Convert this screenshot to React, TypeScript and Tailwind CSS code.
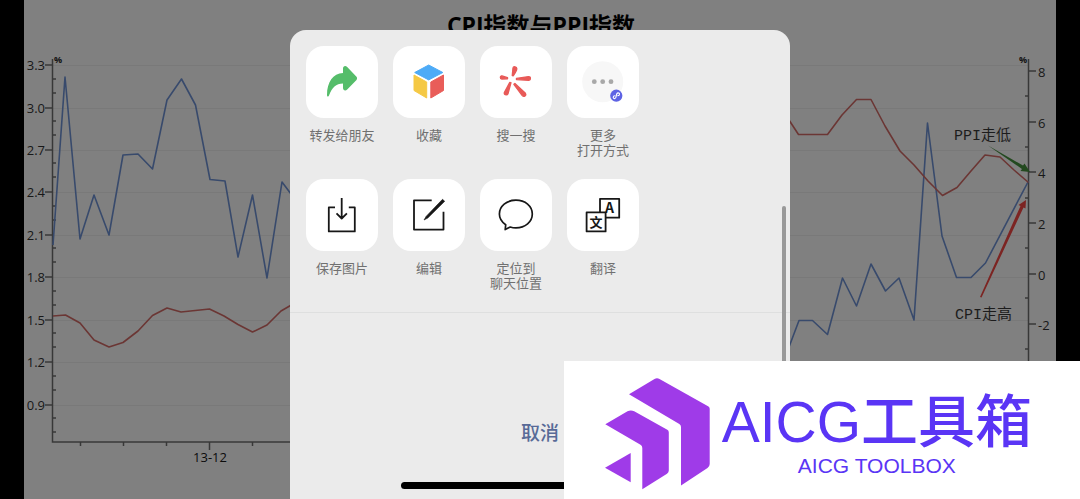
import React from 'react';

const GRID_Y = [65, 108, 150, 192, 235, 277, 320, 362, 405];
const LEFT_LABELS = ['3.3', '3.0', '2.7', '2.4', '2.1', '1.8', '1.5', '1.2', '0.9'];
const LEFT_MINOR = [79, 93, 121, 135, 163, 177, 206, 220, 248, 262, 291, 305, 333, 347, 376, 390, 418, 432];
const RIGHT_TICKS = [
  { label: '8', y: 71 },
  { label: '6', y: 122 },
  { label: '4', y: 172 },
  { label: '2', y: 223 },
  { label: '0', y: 274 },
  { label: '-2', y: 324 },
];
const RIGHT_MINOR = [96, 147, 198, 248, 298, 349];
const BOTTOM_MINOR = [80, 123, 166, 252];

const CPI_LEFT =
  '53,245 65,77 80,239 94,195 109,235 123,155 138,154 152.5,169 167,100 181.5,79 195.5,105 210,179.5 225,181 238,257 252.5,195 267,278 282,182 300,206';
const PPI_LEFT =
  '53,316 65.5,315 80,323 94,340 109,347 123,342.5 138,331 152.5,315.5 167,308 181,312 209.5,309 224,316 238,324.5 252.5,332 267,325 281,311 300,300';
const PPI_RIGHT =
  '780,106 789,120 798.5,134.5 827.5,134.5 842,115 856.5,99.5 871,99.5 885,126 900,151 914,165 928,181 942.5,195.5 957,187.5 971,171 985,155 1000,157 1014,170 1028.5,182.5';
const CPI_RIGHT =
  '780,371 789,347 799,320.5 812.5,320.5 827.5,334.5 842.5,278 856.5,306 871,264 885.5,291 899,278 914,320 927.5,123 942,236 956.5,277.5 971,277.5 985.5,263 1028.5,181';

const Chart: React.FC = () => (
  <svg viewBox="24 0 1032 499" className="block w-full h-auto" role="img" aria-label="CPI指数与PPI指数">
    <text x="541" y="34" textAnchor="middle" fill="#000" className="font-['Open_Sans','Noto_Sans_CJK_SC',sans-serif] text-[23px] font-bold">
      CPI指数与PPI指数
    </text>

    {/* Grid */}
    {GRID_Y.map((y) => (
      <line key={y} x1="53" x2="1028" y1={y + 0.5} y2={y + 0.5} stroke="#797979" />
    ))}

    {/* Axes */}
    <g stroke="#383838" strokeWidth="1.5">
      <path d="M52.5 59V442H1028.5V59" fill="none" />
      {GRID_Y.map((y) => (
        <line key={y} x1="45" x2="52" y1={y} y2={y} />
      ))}
      {LEFT_MINOR.map((y) => (
        <line key={y} x1="53" x2="56" y1={y} y2={y} />
      ))}
      {RIGHT_TICKS.map((t) => (
        <line key={t.label} x1="1029" x2="1036" y1={t.y} y2={t.y} />
      ))}
      {RIGHT_MINOR.map((y) => (
        <line key={y} x1="1025" x2="1028" y1={y} y2={y} />
      ))}
      {BOTTOM_MINOR.map((x) => (
        <line key={x} x1={x + 0.5} x2={x + 0.5} y1="442" y2="446" />
      ))}
      <line x1="209.5" x2="209.5" y1="442" y2="450" />
    </g>

    {/* Axis labels */}
    <g fill="#181818" className="font-['Open_Sans',sans-serif] text-[13px] font-medium">
      {GRID_Y.map((y, i) => (
        <text key={y} x="45" y={y + 5} textAnchor="end">{LEFT_LABELS[i]}</text>
      ))}
      {RIGHT_TICKS.map((t) => (
        <text key={t.label} x="1038" y={t.y + 6}>{t.label}</text>
      ))}
      <text x="210" y="462" textAnchor="middle" fill="#0c0c0c">13-12</text>
    </g>
    <g fill="#111" className="font-['Open_Sans',sans-serif] text-[9px] font-bold">
      <text x="54" y="63">%</text>
      <text x="1019" y="63">%</text>
    </g>

    {/* Series */}
    <g fill="none" strokeWidth="1.6" strokeLinejoin="round">
      <polyline points={CPI_LEFT} stroke="#384a6c" />
      <polyline points={CPI_RIGHT} stroke="#384a6c" />
      <polyline points={PPI_LEFT} stroke="#6b3634" />
      <polyline points={PPI_RIGHT} stroke="#6b3634" />
    </g>

    {/* Annotations */}
    <path d="M988 145.5L1023 165.500L1024.500 163.500L1030 172L1020.500 171L1022 169Z" fill="#23491f" />
    <path d="M980 297L1020.500 206L1018.500 205L1026 200L1025.500 208.500L1023.500 207.500L981.500 297.500Z" fill="#7c2422" />
    <g fill="#1c1c1c" className="font-['Liberation_Mono','Noto_Sans_CJK_SC',monospace] text-[15px]">
      <text x="954" y="140">PPI走低</text>
      <text x="955" y="319">CPI走高</text>
    </g>
  </svg>
);

const Icon: React.FC<{ children: React.ReactNode }> = ({ children }) => (
  <svg viewBox="0 0 72 72" className="w-full h-full" fill="none" stroke="none" aria-hidden="true">
    {children}
  </svg>
);

const ShareIcon = () => (
  <Icon>
    <path d="M37 27V22.500C37 19.800 39.500 19.200 41.200 20.900L50.500 30.800C51.300 31.900 51.300 32.800 50.500 33.900L41.200 43.500C39.500 45.200 37 44.500 37 42V37.500C30 37.500 26 41.500 23 49.500C22.500 51.200 21 50.800 21 49C21 36 27 27.500 37 27Z" fill="#55bd6a" />
  </Icon>
);

const CubeIcon = () => (
  <Icon>
    <g strokeWidth="1" strokeLinejoin="round">
      <path d="M35.700 19L49.800 26.500L35.700 33.900L21.700 26.500Z" fill="#4dabf7" stroke="#4dabf7" />
      <path d="M21 29L33.700 36V52L21 44.500Z" fill="#f5c945" stroke="#f5c945" />
      <path d="M50.500 29L37.800 36V52L50.500 44.500Z" fill="#e95d59" stroke="#e95d59" />
    </g>
  </Icon>
);

const SearchIcon = () => (
  <Icon>
    <g fill="#e85a58" stroke="#e85a58" strokeWidth="1.4" strokeLinejoin="round">
      <path d="M32.300 29.500L33 22C33.300 20.200 36.800 20.500 36.800 22.700C36.600 25 34.500 28 33.300 29.700Z" />
      <path d="M36.500 32.400L48.500 30.600C51 30.400 51 34.200 48.500 34.200L36.500 33.600Z" />
      <path d="M34.900 37.600L45.400 47.300C46.800 49.200 44 51.500 42.300 49.600L33.900 38.400Z" />
      <path d="M29.700 36.500L24.500 46.300C23.500 48.700 26.900 49.800 28 47.600L30.900 36.700Z" />
      <path d="M27.500 31.700L22 29.900C20 29.500 19.800 32.700 21.800 33L27.500 32.700Z" />
    </g>
  </Icon>
);

const MoreIcon = () => (
  <Icon>
    <circle cx="35.700" cy="35.700" r="20.500" fill="#f7f7f7" />
    <g fill="#a8a8a8">
      <circle cx="27.300" cy="35.700" r="2.400" />
      <circle cx="35.700" cy="35.700" r="2.400" />
      <circle cx="44" cy="35.700" r="2.400" />
    </g>
    <circle cx="49.300" cy="49.700" r="6.100" fill="#5e63e4" />
    <path d="M47.900 49.800C45.700 49.900 45.700 52.700 47.700 52.600C50.300 52.300 48.200 47.200 51 46.900C53 46.800 53 49.400 50.900 49.600" stroke="#fff" strokeWidth="1.100" strokeLinecap="round" />
  </Icon>
);

const SaveIcon = () => (
  <Icon>
    <g stroke="#171717" strokeWidth="1.800" strokeLinejoin="round">
      <path d="M29 28.400H22.800V52.400H48.800V28.400H42.800" />
      <path d="M35.700 19V39.300M30.500 34.400L35.700 39.500L40.900 34.400" />
    </g>
  </Icon>
);

const EditIcon = () => (
  <Icon>
    <path d="M38.700 21.300H21V50.600H50.500V32.700" stroke="#171717" strokeWidth="1.800" strokeLinejoin="round" />
    <path d="M31 41L33.300 37.200L49.500 20.300L51.700 22.300L34.800 39Z" fill="#171717" stroke="#171717" strokeWidth="0.600" strokeLinejoin="round" />
  </Icon>
);

const ChatIcon = () => (
  <Icon>
    <path d="M25.200 50.600L25.700 45.800C21.700 43 19.400 39.300 19.400 35C19.400 27.200 26.600 21.200 35.900 21.200C45.200 21.200 52.300 27.200 52.300 35C52.300 42.800 45.200 48.900 35.900 48.900C33.900 48.900 32 48.600 30.200 48Z" stroke="#171717" strokeWidth="1.700" strokeLinejoin="round" />
  </Icon>
);

const TranslateIcon = () => (
  <Icon>
    <g stroke="#171717" strokeWidth="1.800" strokeLinejoin="round">
      <path d="M33 33V19.800H52.200V38.700H39" />
      <rect x="19.600" y="33.400" width="19" height="19" />
    </g>
    <text x="42.500" y="34" textAnchor="middle" fill="#171717" className="font-['Noto_Sans_CJK_SC',sans-serif] text-[14px] font-bold">A</text>
    <text x="29" y="48" textAnchor="middle" fill="#171717" className="font-['Noto_Sans_CJK_SC',sans-serif] text-[13px] font-bold">文</text>
  </Icon>
);

const ACTIONS = [
  { id: 'share', label: '转发给朋友', icon: ShareIcon },
  { id: 'favorite', label: '收藏', icon: CubeIcon },
  { id: 'search', label: '搜一搜', icon: SearchIcon },
  { id: 'more', label: '更多\n打开方式', icon: MoreIcon },
  { id: 'save', label: '保存图片', icon: SaveIcon },
  { id: 'edit', label: '编辑', icon: EditIcon },
  { id: 'locate', label: '定位到\n聊天位置', icon: ChatIcon },
  { id: 'translate', label: '翻译', icon: TranslateIcon },
];

const ActionSheet: React.FC = () => (
  <div className="absolute top-[30px] bottom-0 left-1/2 -translate-x-1/2 w-[500px] max-w-full flex flex-col rounded-t-2xl bg-[#ebebeb] overflow-hidden">
    <div className="grid grid-cols-[repeat(4,72px)] gap-x-[15px] gap-y-[22px] px-4 pt-4 pb-[22px] border-b border-[#dedfdf]">
      {ACTIONS.map(({ id, label, icon: ActionIcon }) => (
        <button key={id} type="button" className="flex flex-col items-center justify-start">
          <span className="w-[72px] h-[72px] rounded-[18px] bg-white">
            <ActionIcon />
          </span>
          <span className="mt-[9px] text-[13px] leading-[15px] text-[#707070] whitespace-pre">{label}</span>
        </button>
      ))}
    </div>
    <button type="button" className="mt-auto mb-9 self-center text-[19px] leading-7 font-medium text-[#586a97]">取消</button>
    <div className="mb-[10px] self-center w-[278px] h-[7px] rounded-full bg-black shrink-0"></div>

    {/* Scroll thumb */}
    <div className="absolute top-44 bottom-24 right-1 w-1 rounded-full bg-[#999]"></div>
  </div>
);

const Watermark: React.FC = () => (
  <div className="absolute right-0 bottom-0 flex items-start bg-white pl-[41px] pr-12 pt-[17px] pb-[9px] text-[#5a35f5]">
    <svg viewBox="0 0 105 112" className="w-[105px] h-[112px] shrink-0" fill="#9f3be8" aria-hidden="true">
      <path d="M24 16.300L49.500 1C51.200 0.100 52.800 0.100 54.500 1L103.500 28.500Q104.700 29.200 104.700 30.700V86Q104.700 88.500 102.500 90L76 107.500V49Q76 47 74.300 46Z" />
      <path d="M0.300 46.300L22.500 33.200C24.700 32.100 27 32.100 29.200 33.200L62.300 51.700Q63.800 52.500 63.800 54.500V92.500Q63.800 94.500 62 95.800L37.300 111.300V70Q37.300 67.800 35.500 66.700Z" />
      <path d="M0 89.700L25.700 75V104.300Z" />
    </svg>
    <div className="ml-3 pt-[14px] text-center whitespace-nowrap font-['Liberation_Sans','Noto_Sans_CJK_SC',sans-serif]">
      <p className="text-[57px] leading-[60px] font-medium">AICG工具箱</p>
      <p className="text-[21px] leading-7">AICG TOOLBOX</p>
    </div>
  </div>
);

const App: React.FC = () => {
  return (
    <div className="min-h-screen bg-black font-['Noto_Sans_CJK_SC',sans-serif]">
      <main className="relative">
        <div className="px-6">
          <div className="bg-[#808080]">
            <Chart />
          </div>
        </div>
        <ActionSheet />
        <Watermark />
      </main>
    </div>
  );
};

export default App;
